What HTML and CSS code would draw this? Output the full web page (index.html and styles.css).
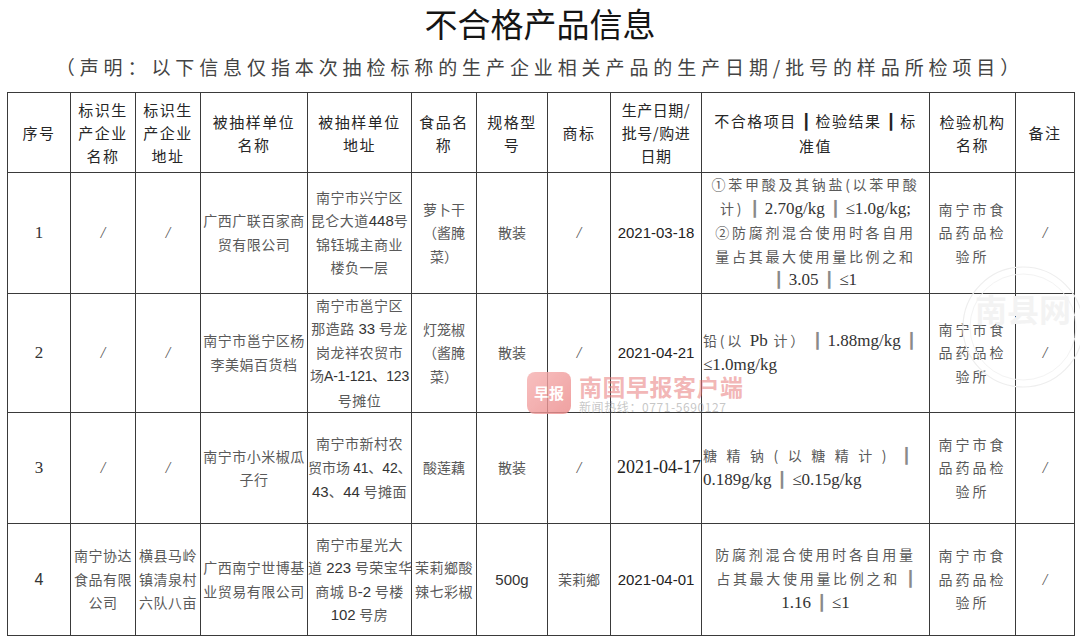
FILE: index.html
```html
<!DOCTYPE html>
<html lang="zh-CN">
<head>
<meta charset="utf-8">
<title>不合格产品信息</title>
<link rel="stylesheet" href="styles.css">
</head>
<body>
<div class="page">
  <h1 class="title">不合格产品信息</h1>
  <p class="subtitle">（声明：以下信息仅指本次抽检标称的生产企业相关产品的生产日期/批号的样品所检项目）</p>
  <table class="grid">
    <colgroup>
      <col class="c1"><col class="c2"><col class="c3"><col class="c4"><col class="c5"><col class="c6">
      <col class="c7"><col class="c8"><col class="c9"><col class="c10"><col class="c11"><col class="c12">
    </colgroup>
    <thead>
      <tr class="head">
        <th>序号</th>
        <th>标识生<br>产企业<br>名称</th>
        <th>标识生<br>产企业<br>地址</th>
        <th>被抽样单位<br>名称</th>
        <th>被抽样单位<br>地址</th>
        <th>食品名<br>称</th>
        <th>规格型<br>号</th>
        <th>商标</th>
        <th class="tight">生产日期/<br>批号/购进<br>日期</th>
        <th>不合格项目 <span class="hbar">┃</span> 检验结果 <span class="hbar">┃</span> 标<br>准值</th>
        <th>检验机构<br>名称</th>
        <th>备注</th>
      </tr>
    </thead>
    <tbody>
      <tr class="r1">
        <td class="no">1</td>
        <td class="sl">/</td>
        <td class="sl">/</td>
        <td class="full">广西广联百家商<br>贸有限公司</td>
        <td class="full">南宁市兴宁区<br>昆仑大道<span class="num">448</span>号<br>锦钰城主商业<br>楼负一层</td>
        <td>萝卜干<br>（酱腌<br>菜）</td>
        <td>散装</td>
        <td class="sl">/</td>
        <td class="date">2021-03-18</td>
        <td class="res center">①苯甲酸及其钠盐(以苯甲酸<br>计) <span class="bar">┃</span> <span class="lat">2.70g/kg</span> <span class="bar">┃</span> <span class="lat">≤1.0g/kg;</span><br>②防腐剂混合使用时各自用<br>量占其最大使用量比例之和<br><span class="bar">┃</span> <span class="lat">3.05</span> <span class="bar">┃</span> <span class="lat">≤1</span></td>
        <td class="org">南宁市食<br>品药品检<br>验所</td>
        <td class="sl">/</td>
      </tr>
      <tr class="r2">
        <td class="no">2</td>
        <td class="sl">/</td>
        <td class="sl">/</td>
        <td class="full">南宁市邕宁区杨<br>李美娟百货档</td>
        <td class="full">南宁市邕宁区<br>那造路 <span class="num">33</span> 号龙<br>岗龙祥农贸市<br><span class="squeeze">场<span class="num">A-1-121、123</span></span><br>号摊位</td>
        <td>灯笼椒<br>（酱腌<br>菜）</td>
        <td>散装</td>
        <td class="sl">/</td>
        <td class="date">2021-04-21</td>
        <td class="res left">铅(以 <span class="lat">Pb</span> 计） <span class="bar">┃</span> <span class="lat">1.88mg/kg</span> <span class="bar">┃</span><br><span class="lat">≤1.0mg/kg</span></td>
        <td class="org">南宁市食<br>品药品检<br>验所</td>
        <td class="sl">/</td>
      </tr>
      <tr class="r3">
        <td class="no">3</td>
        <td class="sl">/</td>
        <td class="sl">/</td>
        <td class="full">南宁市小米椒瓜<br>子行</td>
        <td class="full">南宁市新村农<br><span class="squeeze">贸市场 <span class="num">41</span>、<span class="num">42</span>、</span><br><span class="num">43</span>、<span class="num">44</span> 号摊面</td>
        <td>酸莲藕</td>
        <td>散装</td>
        <td class="sl">/</td>
        <td class="date serifdate">2021-04-17</td>
        <td class="res left"><span class="wide">糖精钠(以糖精计)</span> <span class="bar">┃</span><br><span class="lat">0.189g/kg</span> <span class="bar">┃</span> <span class="lat">≤0.15g/kg</span></td>
        <td class="org">南宁市食<br>品药品检<br>验所</td>
        <td class="sl">/</td>
      </tr>
      <tr class="r4">
        <td class="no sans">4</td>
        <td class="narrow">南宁协达<br>食品有限<br>公司</td>
        <td class="narrow">横县马岭<br>镇清泉村<br>六队八亩</td>
        <td class="full">广西南宁世博基<br>业贸易有限公司</td>
        <td class="full">南宁市星光大<br>道 <span class="num">223</span> 号荣宝华<br>商城 B<span class="num">-2</span> 号楼<br><span class="num">102</span> 号房</td>
        <td class="narrow">茉莉鄉酸<br>辣七彩椒</td>
        <td class="num">500g</td>
        <td>茉莉鄉</td>
        <td class="date">2021-04-01</td>
        <td class="res center">防腐剂混合使用时各自用量<br>占其最大使用量比例之和 <span class="bar">┃</span><br><span class="lat">1.16</span> <span class="bar">┃</span> <span class="lat">≤1</span></td>
        <td class="org">南宁市食<br>品药品检<br>验所</td>
        <td class="sl">/</td>
      </tr>
    </tbody>
  </table>

  <div class="wm-brand">
    <div class="wm-logo">早报</div>
    <div class="wm-text">
      <div class="wm-name">南国早报客户端</div>
      <div class="wm-line">新闻热线：0771-5690127</div>
    </div>
  </div>

  <svg class="wm-stamp" width="130" height="130" viewBox="0 0 130 130" aria-hidden="true">
    <circle cx="65" cy="65" r="60" fill="none" stroke="#eeeeee" stroke-width="1.2"/>
    <circle cx="65" cy="65" r="53" fill="none" stroke="#f3f3f3" stroke-width="1"/>
    <text x="65" y="60" text-anchor="middle" font-size="32" fill="#f3f3f3" font-family="Noto Sans CJK SC, sans-serif" font-weight="700">南县网</text>
  </svg>
</div>
</body>
</html>
```

FILE: styles.css
```css
html, body {
  margin: 0;
  padding: 0;
  background: #ffffff;
}

body {
  font-family: "Liberation Serif", "Noto Sans CJK SC", serif;
  color: #555;
}

.page {
  position: relative;
  width: 1080px;
  height: 643px;
  overflow: hidden;
  box-sizing: border-box;
  padding-left: 7px;
}

.title {
  margin: 0;
  padding: 2px 7px 0 0;
  text-align: center;
  font-family: "Noto Sans CJK SC", sans-serif;
  font-weight: 400;
  font-size: 33px;
  line-height: 42px;
  color: #151515;
}

.subtitle {
  margin: 11px 0 0 0;
  text-align: center;
  font-family: "Noto Sans CJK SC", sans-serif;
  font-size: 19px;
  line-height: 24px;
  letter-spacing: 4.9px;
  color: #444;
  padding-right: 7px;
}

.grid {
  margin-top: 13px;
  width: 1067px;
  table-layout: fixed;
  border-collapse: collapse;
}

.c1 { width: 63px; }
.c2 { width: 65px; }
.c3 { width: 65px; }
.c4 { width: 107px; }
.c5 { width: 104px; }
.c6 { width: 65px; }
.c7 { width: 71px; }
.c8 { width: 63px; }
.c9 { width: 91px; }
.c10 { width: 228px; }
.c11 { width: 86px; }
.c12 { width: 59px; }

.grid th,
.grid td {
  border: 1px solid #3a3a3a;
  padding: 0;
  text-align: center;
  vertical-align: middle;
  overflow: hidden;
  white-space: nowrap;
}

.grid th {
  font-family: "Noto Sans CJK SC", sans-serif;
  font-weight: 400;
  font-size: 15px;
  line-height: 23px;
  letter-spacing: 1.5px;
  color: #262626;
}

.grid th.tight { letter-spacing: 0.5px; }

.grid td {
  font-family: "Noto Sans CJK SC", sans-serif;
  font-size: 14px;
  line-height: 23.5px;
  color: #5a5a5a;
}

.head { height: 80px; }
.r1 { height: 120px; }
.r2 { height: 118px; }
.r3 { height: 111px; }
.r4 { height: 112px; }

.grid td.full { letter-spacing: 0.5px; }
.grid td.narrow { letter-spacing: 0.5px; }

.grid td.no {
  font-family: "Liberation Serif", serif;
  font-size: 17px;
  color: #333;
}

.grid td.no.sans {
  font-family: "Liberation Sans", sans-serif;
  font-size: 16px;
}

.grid td.sl {
  font-family: "Liberation Serif", serif;
  font-style: italic;
  font-size: 16px;
  color: #555;
}

.num {
  font-family: "Liberation Sans", sans-serif;
  font-size: 15px;
  color: #333;
  letter-spacing: 0;
}

.squeeze { letter-spacing: 0; }
.squeeze .num { font-size: 14px; letter-spacing: -0.2px; }

.grid td.num { font-family: "Liberation Sans", sans-serif; font-size: 15px; color: #333; }

.grid td.date {
  font-family: "Liberation Sans", sans-serif;
  font-size: 15px;
  color: #222;
  letter-spacing: 0;
}

.grid td.serifdate {
  font-family: "Liberation Serif", serif;
  font-size: 18px;
  text-align: right;
}

.grid td.res {
  letter-spacing: 2.7px;
}

.grid td.res.left { text-align: left; padding-left: 1px; }
.grid td.res.center { text-align: center; }

.lat {
  font-family: "Liberation Serif", serif;
  font-size: 17px;
  letter-spacing: 0;
  color: #333;
}

.bar {
  font-family: "DejaVu Sans", sans-serif;
  color: #8a8a8a;
  font-size: 15px;
  letter-spacing: 0;
}

.hbar {
  font-family: "DejaVu Sans", sans-serif;
  color: #222;
  font-size: 15px;
  letter-spacing: 0;
}

.wide { letter-spacing: 9.5px; }

.grid td.org { letter-spacing: 3px; }

/* watermarks overlaying the table */
.wm-brand {
  position: absolute;
  left: 527px;
  top: 372px;
  display: flex;
  align-items: flex-start;
  gap: 8px;
  pointer-events: none;
}

.wm-logo {
  width: 44px;
  height: 42px;
  border-radius: 8px;
  background: linear-gradient(135deg, #f6b0b0, #ec8a8a);
  color: #ffffff;
  font-family: "Noto Sans CJK SC", sans-serif;
  font-weight: 700;
  font-size: 15px;
  line-height: 42px;
  text-align: center;
  opacity: 0.8;
}

.wm-text {
  display: flex;
  flex-direction: column;
}

.wm-name {
  font-family: "Noto Sans CJK SC", sans-serif;
  font-weight: 700;
  font-size: 23px;
  line-height: 28px;
  letter-spacing: 0.5px;
  color: rgba(232, 120, 120, 0.55);
}

.wm-line {
  font-family: "Noto Sans CJK SC", sans-serif;
  font-size: 12px;
  line-height: 14px;
  letter-spacing: 0.6px;
  color: rgba(150, 150, 150, 0.55);
}

.wm-stamp {
  position: absolute;
  left: 958px;
  top: 262px;
  pointer-events: none;
}
```
